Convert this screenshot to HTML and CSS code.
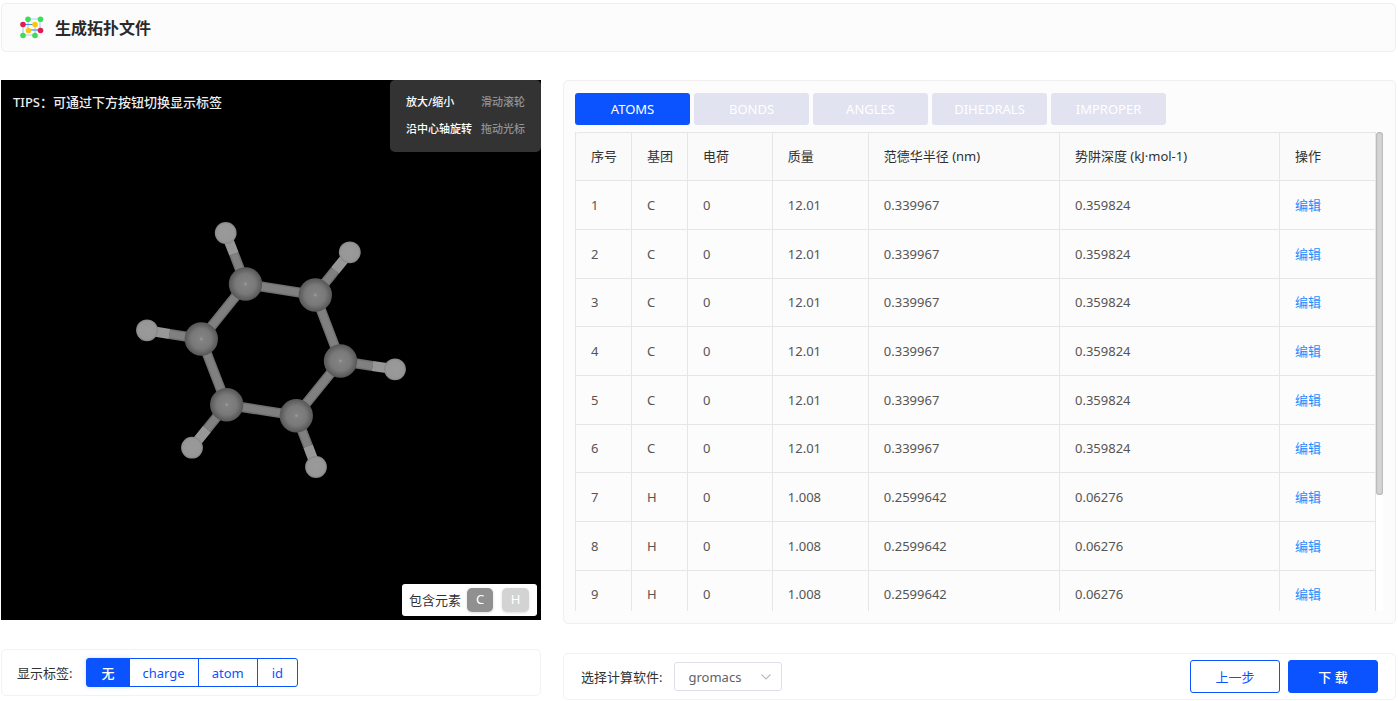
FILE: index.html
```html
<!DOCTYPE html>
<html lang="zh-CN">
<head>
<meta charset="utf-8">
<title>生成拓扑文件</title>
<link rel="stylesheet" href="styles.css">
</head>
<body>
<header class="card page-head">
  <svg class="logo" viewBox="0 0 24 24" aria-hidden="true">
    <g fill="none" stroke="#a9cdf7" stroke-width="1.2"><path d="M8 3H20V14M8 3V14H20M3 8.500V19H15V8.500M3 8.500H15"/></g>
    <path d="M3 8.500H15M8 14H20" stroke="#4a90f0" stroke-width="1.2"/>
    <g fill="#3fdc55"><circle cx="8" cy="3.200" r="2.800"/><circle cx="20.500" cy="3.200" r="2.800"/><circle cx="3" cy="19.500" r="2.800"/><circle cx="15" cy="19.500" r="2.800"/></g>
    <g fill="#e5184f"><circle cx="3" cy="8.500" r="2.800"/><circle cx="20.500" cy="14.500" r="2.800"/></g>
    <g fill="#fcc60c"><circle cx="15" cy="8.500" r="2.800"/><circle cx="8.500" cy="14.500" r="2.800"/></g>
  </svg>
  <h1>生成拓扑文件</h1>
</header>
<main class="layout">
  <section class="column">
    <div class="viewer">
      <svg class="molecule" viewBox="1 80 540 540" role="img" aria-label="C6H6">
        <defs>
          <radialGradient id="carbon"><stop offset="0" stop-color="#a0a0a0"/><stop offset=".12" stop-color="#828282"/><stop offset=".6" stop-color="#797979"/><stop offset="1" stop-color="#565656"/></radialGradient>
          <radialGradient id="hydrogen"><stop offset="0" stop-color="#9a9a9a"/><stop offset=".8" stop-color="#979797"/><stop offset="1" stop-color="#858585"/></radialGradient>
        </defs>
        <g fill="none" stroke-width="10" stroke="#707070">
          <path d="M245.5 284L315.3 295L340.5 361L296.3 415.7L226.7 404.7L201.3 339Z"/>
          <path d="M245.5 284L234 254M315.3 295L335 270.5M340.5 361L372.5 366M296.3 415.7L308 446M226.7 404.7L207 429M201.3 339L169.5 334"/>
        </g>
        <g fill="none" stroke-width="7" stroke="#808080">
          <path d="M245.5 284L315.3 295L340.5 361L296.3 415.7L226.7 404.7L201.3 339Z"/>
          <path d="M245.5 284L234 254M315.3 295L335 270.5M340.5 361L372.5 366M296.3 415.7L308 446M226.7 404.7L207 429M201.3 339L169.5 334"/>
        </g>
        <path fill="none" stroke="#979797" stroke-width="10" d="M234 254L225.7 233M335 270.5L349.8 252.3M372.5 366L395 369.3M308 446L316 467M207 429L192 447.7M169.5 334L147 330.3"/>
        <g fill="url(#carbon)"><circle cx="245.5" cy="284" r="16.7"/><circle cx="315.3" cy="295" r="16.7"/><circle cx="340.5" cy="361" r="16.7"/><circle cx="296.3" cy="415.7" r="16.7"/><circle cx="226.7" cy="404.7" r="16.7"/><circle cx="201.3" cy="339" r="16.7"/></g>
        <g fill="url(#hydrogen)"><circle cx="225.7" cy="233" r="10.9"/><circle cx="349.8" cy="252.3" r="10.9"/><circle cx="395" cy="369.3" r="10.9"/><circle cx="316" cy="467" r="10.9"/><circle cx="192" cy="447.7" r="10.9"/><circle cx="147" cy="330.3" r="10.9"/></g>
      </svg>
      <p class="tips">TIPS：可通过下方按钮切换显示标签</p>
      <dl class="help">
        <dt>放大/缩小</dt><dd>滑动滚轮</dd>
        <dt>沿中心轴旋转</dt><dd>拖动光标</dd>
      </dl>
      <div class="legend"><span class="legend-label">包含元素</span><span class="element carbon">C</span><span class="element hydrogen">H</span></div>
    </div>
    <div class="card bar label-bar">
      <span>显示标签:</span>
      <div class="segments">
        <button type="button" class="active">无</button><button type="button">charge</button><button type="button">atom</button><button type="button">id</button>
      </div>
    </div>
  </section>
  <section class="column">
    <div class="card panel">
      <nav class="tabs">
        <button type="button" class="active">ATOMS</button><button type="button">BONDS</button><button type="button">ANGLES</button><button type="button">DIHEDRALS</button><button type="button">IMPROPER</button>
      </nav>
      <div class="table-area">
        <div class="table-clip">
          <table>
            <colgroup><col class="c-id"><col class="c-group"><col class="c-charge"><col class="c-mass"><col class="c-radius"><col class="c-depth"><col class="c-action"></colgroup>
            <thead><tr><th>序号</th><th>基团</th><th>电荷</th><th>质量</th><th>范德华半径 (nm)</th><th>势阱深度 (kJ·mol-1)</th><th>操作</th></tr></thead>
            <tbody>
              <tr><td>1</td><td>C</td><td>0</td><td>12.01</td><td>0.339967</td><td>0.359824</td><td><a href="#">编辑</a></td></tr>
              <tr><td>2</td><td>C</td><td>0</td><td>12.01</td><td>0.339967</td><td>0.359824</td><td><a href="#">编辑</a></td></tr>
              <tr><td>3</td><td>C</td><td>0</td><td>12.01</td><td>0.339967</td><td>0.359824</td><td><a href="#">编辑</a></td></tr>
              <tr><td>4</td><td>C</td><td>0</td><td>12.01</td><td>0.339967</td><td>0.359824</td><td><a href="#">编辑</a></td></tr>
              <tr><td>5</td><td>C</td><td>0</td><td>12.01</td><td>0.339967</td><td>0.359824</td><td><a href="#">编辑</a></td></tr>
              <tr><td>6</td><td>C</td><td>0</td><td>12.01</td><td>0.339967</td><td>0.359824</td><td><a href="#">编辑</a></td></tr>
              <tr><td>7</td><td>H</td><td>0</td><td>1.008</td><td>0.2599642</td><td>0.06276</td><td><a href="#">编辑</a></td></tr>
              <tr><td>8</td><td>H</td><td>0</td><td>1.008</td><td>0.2599642</td><td>0.06276</td><td><a href="#">编辑</a></td></tr>
              <tr><td>9</td><td>H</td><td>0</td><td>1.008</td><td>0.2599642</td><td>0.06276</td><td><a href="#">编辑</a></td></tr>
            </tbody>
          </table>
        </div>
        <div class="track"><div class="thumb"></div></div>
      </div>
    </div>
    <div class="card bar software-bar">
      <label for="software">选择计算软件:</label>
      <span class="select">
        <select id="software"><option>gromacs</option></select>
        <svg viewBox="0 0 10 6" aria-hidden="true"><path d="M.5 .5L5 5L9.500 .5" fill="none" stroke="#b4b8c0" stroke-width="1.1"/></svg>
      </span>
      <div class="actions">
        <button type="button" class="prev">上一步</button>
        <button type="button" class="download">下 载</button>
      </div>
    </div>
  </section>
</main>
</body>
</html>
```
FILE: styles.css
```css
* { box-sizing: border-box; }
body {
  margin: 0;
  padding: 3px 2px 0 1px;
  background: #fff;
  color: #303133;
  font: 13px/20px "Noto Sans", "Noto Sans CJK SC", sans-serif;
}
button, select { font: inherit; cursor: pointer; }
.card { border: 1px solid #efefef; border-radius: 5px; background: #fcfcfc; }
.page-head { display: flex; align-items: center; gap: 11px; padding: 12px 18px 11px; }
.logo { width: 24px; height: 24px; }
h1 { margin: 0; font-size: 16px; line-height: 24px; font-weight: 700; color: #2a2a2a; }
.layout { display: grid; grid-template-columns: 540fr 833fr; gap: 22px; margin-top: 28px; align-items: start; }
.column { display: grid; gap: 29px; min-width: 0; }

.viewer { position: relative; aspect-ratio: 1; background: #000; }
.molecule { display: block; width: 100%; height: 100%; }
.tips { position: absolute; top: 12px; left: 12px; margin: 0; color: #eee; font-weight: 500; }
.help {
  position: absolute; top: 0; right: 0; margin: 0; padding: 12px 16px 13px;
  display: grid; grid-template-columns: auto auto; column-gap: 9px; row-gap: 7px;
  background: #333; border-radius: 5px; font-size: 11px; font-weight: 500; color: #fff;
}
.help dd { margin: 0; color: #929292; }
.legend {
  position: absolute; right: 4px; bottom: 4px; display: flex; align-items: center; height: 32px;
  padding: 0 8px 0 7px; gap: 9px; background: #fff; border-radius: 3px;
}
.legend-label { width: 49px; white-space: nowrap; }
.element { width: 26px; height: 24px; border-radius: 5px; color: #fff; line-height: 23px; text-align: center; box-shadow: 0 1px 3px #0002; }
.carbon { background: #909090; }
.hydrogen { width: 27px; background: #d3d3d3; }

.bar { display: flex; align-items: center; height: 47px; background: #fff; border-color: #f2f2f2; padding: 0 15px; gap: 12px; }
.label-bar { gap: 14px; }
.segments { display: flex; }
.segments button {
  height: 29px; padding: 0 13px; color: #0b53ff; background: #fff;
  border: 1px solid #0b53ff; margin-left: -1px; line-height: 20px;
}
.segments button:first-child { margin-left: 0; border-radius: 3px 0 0 3px; padding: 0 14px; }
.segments button:last-child { padding: 0 14px; border-radius: 0 3px 3px 0; }
.segments .active { color: #fff; background: #0b53ff; font-weight: 500; box-shadow: 0 0 4px #0b53ff33; }

.panel { padding: 12px 12px 12px 11px; }
.tabs { display: flex; gap: 4px; height: 32px; }
.tabs button { width: 115px; padding: 0; border: 0; border-radius: 3px; background: #e1e3f0; color: #fff; }
.tabs .active { background: #0b53ff; }
.table-area { display: flex; height: 479px; margin-top: 7px; }
.table-clip { flex: 1; min-width: 0; overflow: hidden; }
table { width: 100%; table-layout: fixed; border-collapse: separate; border-spacing: 0; border-left: 1px solid #e6e6e6; }
th, td { padding: 0 15px 1px; text-align: left; font-weight: 400; border-right: 1px solid #e6e6e6; border-bottom: 1px solid #e6e6e6; white-space: nowrap; }
th { height: 49px; padding-bottom: 2px; border-top: 1px solid #e6e6e6; background: #fafafa; color: #303133; }
th:first-child { border-top-left-radius: 3px; }
td { height: 49px; color: #555; }
tr:nth-child(3n) td { height: 48px; }
td a { color: #1e8cff; text-decoration: none; }
.c-id, .c-group { width: 7%; }
.c-charge { width: 10.6%; }
.c-mass { width: 12%; }
.c-radius { width: 23.9%; }
.c-depth { width: 27.5%; }
.c-action { width: 12%; }
.track { width: 7px; background: #fff; }
.thumb { height: 363px; border-radius: 4px; background: #d4d4d4; box-shadow: inset 0 0 2px #0006; }

.software-bar { padding: 0 17px; }
.select { position: relative; }
.select select {
  appearance: none; display: block; width: 108px; height: 29px; padding: 0 13px;
  border: 1px solid #dcdfe6; border-radius: 3px; background: #fff; color: #606266;
}
.select svg { position: absolute; right: 11px; top: 12px; width: 10px; height: 6px; pointer-events: none; }
.actions { display: flex; gap: 8px; margin-left: auto; }
.actions button { width: 90px; height: 33px; padding: 0; border: 1px solid #0b53ff; border-radius: 3px; }
.prev { background: #fff; color: #0b53ff; }
.download { background: #0b53ff; color: #fff; font-weight: 500; }
```
